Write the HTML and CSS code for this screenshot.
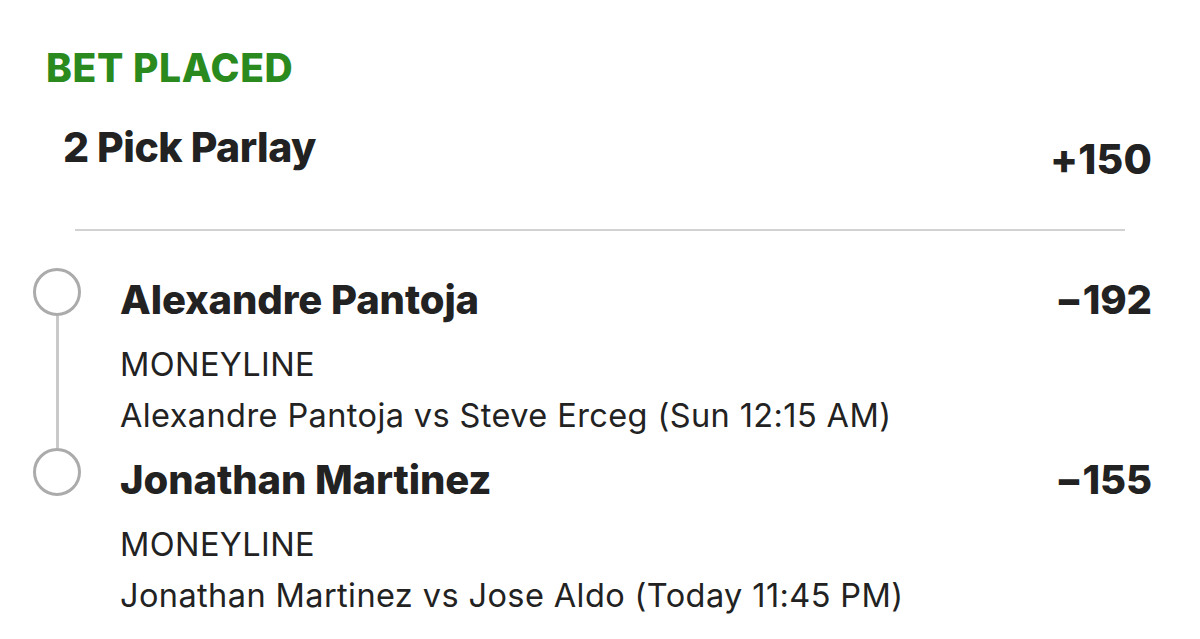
FILE: index.html
```html
<!DOCTYPE html>
<html lang="en">
<head>
<meta charset="utf-8">
<title>Bet Placed</title>
<link rel="stylesheet" href="styles.css">
</head>
<body>
<main class="slip">
  <div class="status">BET PLACED</div>
  <div class="parlay-row">
    <div class="parlay-title">2 Pick Parlay</div>
    <div class="parlay-odds">+150</div>
  </div>
  <div class="divider"></div>
  <ul class="legs">
    <li class="leg">
      <div class="marker"><span class="dot"></span><span class="connector"></span></div>
      <div class="leg-body">
        <div class="leg-head"><span class="name">Alexandre Pantoja</span><span class="odds">−192</span></div>
        <div class="market">MONEYLINE</div>
        <div class="event">Alexandre Pantoja vs Steve Erceg (Sun 12:15 AM)</div>
      </div>
    </li>
    <li class="leg">
      <div class="marker"><span class="dot"></span></div>
      <div class="leg-body">
        <div class="leg-head"><span class="name">Jonathan Martinez</span><span class="odds">−155</span></div>
        <div class="market">MONEYLINE</div>
        <div class="event">Jonathan Martinez vs Jose Aldo (Today 11:45 PM)</div>
      </div>
    </li>
  </ul>
</main>
</body>
</html>
```

FILE: styles.css
```css
html, body {
  margin: 0;
  padding: 0;
  background: #ffffff;
}

body {
  font-family: Inter, "Noto Sans", "Liberation Sans", sans-serif;
  color: #222222;
  width: 1200px;
  height: 639px;
  overflow: hidden;
}

.slip {
  padding: 44px 48px 0 0;
}

.status {
  margin-left: 46px;
  font-size: 39px;
  line-height: 47px;
  font-weight: 800;
  letter-spacing: 0.6px;
  color: #2a8a1d;
}

.parlay-row {
  display: flex;
  justify-content: space-between;
  align-items: flex-start;
  margin-top: 32px;
  margin-left: 63px;
}

.parlay-title {
  font-size: 41px;
  line-height: 49px;
  font-weight: 800;
  letter-spacing: -0.5px;
}

.parlay-odds {
  padding-top: 12px;
  font-size: 41px;
  line-height: 49px;
  font-weight: 800;
  letter-spacing: 0.2px;
}

.divider {
  margin: 45px 27px 0 75px;
  height: 2px;
  background: #d2d2d2;
}

.legs {
  list-style: none;
  margin: 37px 0 0 33px;
  padding: 0;
}

.leg {
  display: flex;
  gap: 39px;
  height: 180px;
}

.marker {
  width: 48px;
  display: flex;
  flex-direction: column;
  align-items: center;
  flex: none;
}

.dot {
  width: 48px;
  height: 48px;
  box-sizing: border-box;
  border: 3px solid #ababab;
  border-radius: 50%;
  flex: none;
}

.connector {
  flex: 1;
  width: 3px;
  background: #c9c9c9;
}

.leg-body {
  flex: 1;
  padding-top: 8px;
}

.leg-head {
  display: flex;
  justify-content: space-between;
  font-size: 40px;
  line-height: 48px;
  font-weight: 800;
  letter-spacing: -0.1px;
}

.market {
  margin-top: 15px;
  font-size: 32.5px;
  line-height: 51px;
  font-weight: 400;
  letter-spacing: 0.4px;
}

.event {
  font-size: 32.5px;
  line-height: 51px;
  font-weight: 400;
  letter-spacing: 0.4px;
}
```
